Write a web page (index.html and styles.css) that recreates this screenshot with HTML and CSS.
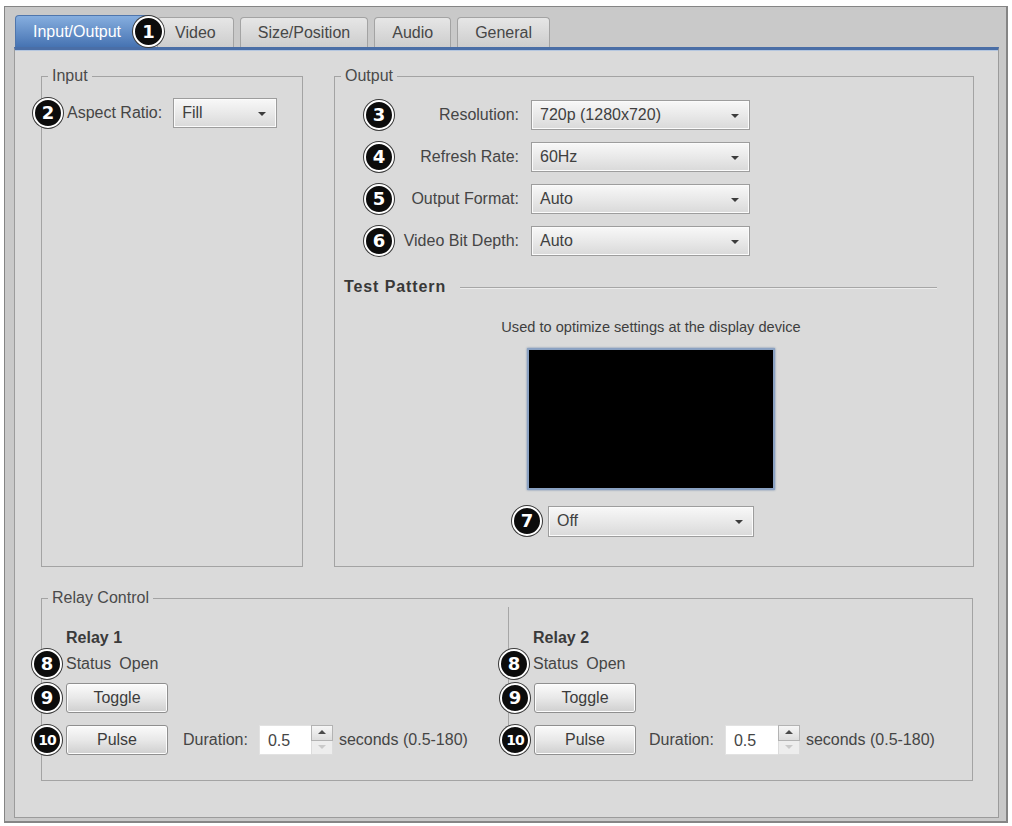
FILE: index.html
```html
<!DOCTYPE html>
<html lang="en">
<head>
    <meta charset="UTF-8">
    <title>Input/Output Settings</title>
    <link rel="stylesheet" href="styles.css">
</head>
<body>
    <div class="window">
        <div class="tabs">
            <div class="tab active">Input/Output<span class="badge badge-tab">1</span></div>
            <div class="tab">Video</div>
            <div class="tab">Size/Position</div>
            <div class="tab">Audio</div>
            <div class="tab">General</div>
        </div>

        <div class="panel">
            <div class="top-row">
                <fieldset class="group io-group">
                    <legend>Input</legend>
                    <div class="input-body">
                        <div class="field-row">
                            <span class="badge">2</span>
                            <label>Aspect Ratio:</label>
                            <div class="select select-fill">Fill</div>
                        </div>
                    </div>
                </fieldset>

                <fieldset class="group io-group">
                    <legend>Output</legend>
                    <div class="output-body">
                        <div class="output-grid">
                            <span class="badge">3</span>
                            <label>Resolution:</label>
                            <div class="select">720p (1280x720)</div>

                            <span class="badge">4</span>
                            <label>Refresh Rate:</label>
                            <div class="select">60Hz</div>

                            <span class="badge">5</span>
                            <label>Output Format:</label>
                            <div class="select">Auto</div>

                            <span class="badge">6</span>
                            <label>Video Bit Depth:</label>
                            <div class="select">Auto</div>
                        </div>

                        <div class="section-title">Test Pattern</div>
                        <p class="hint">Used to optimize settings at the display device</p>
                        <div class="pattern-preview"></div>
                        <div class="pattern-row">
                            <div class="pattern-select">
                                <span class="badge badge-side">7</span>
                                <div class="select select-off">Off</div>
                            </div>
                        </div>
                    </div>
                </fieldset>
            </div>

            <fieldset class="group relay-group">
                <legend>Relay Control</legend>
                <div class="relays">
                    <div class="relay">
                        <div class="relay-title">Relay 1</div>
                        <div class="relay-row status-row">
                            <span class="badge badge-left">8</span>
                            <span>Status</span><span class="status-value">Open</span>
                        </div>
                        <div class="relay-row toggle-row">
                            <span class="badge badge-left">9</span>
                            <button class="btn">Toggle</button>
                        </div>
                        <div class="relay-row pulse-row">
                            <span class="badge badge-left badge-10">10</span>
                            <button class="btn">Pulse</button>
                            <span class="duration-label">Duration:</span>
                            <div class="spin-input">
                                <div class="spin-value">0.5</div>
                                <div class="spin-buttons">
                                    <span class="spin-up"></span>
                                    <span class="spin-down"></span>
                                </div>
                            </div>
                            <span class="range-label">seconds (0.5-180)</span>
                        </div>
                    </div>

                    <div class="relay relay-second">
                        <div class="relay-title">Relay 2</div>
                        <div class="relay-row status-row">
                            <span class="badge badge-left">8</span>
                            <span>Status</span><span class="status-value">Open</span>
                        </div>
                        <div class="relay-row toggle-row">
                            <span class="badge badge-left">9</span>
                            <button class="btn">Toggle</button>
                        </div>
                        <div class="relay-row pulse-row">
                            <span class="badge badge-left badge-10">10</span>
                            <button class="btn">Pulse</button>
                            <span class="duration-label">Duration:</span>
                            <div class="spin-input">
                                <div class="spin-value">0.5</div>
                                <div class="spin-buttons">
                                    <span class="spin-up"></span>
                                    <span class="spin-down"></span>
                                </div>
                            </div>
                            <span class="range-label">seconds (0.5-180)</span>
                        </div>
                    </div>
                </div>
            </fieldset>
        </div>
    </div>
</body>
</html>
```

FILE: styles.css
```css
body {
    margin: 0;
    background: #fff;
    font-family: "Liberation Sans", Arial, sans-serif;
    font-size: 16px;
    color: #454545;
}
.window {
    box-sizing: border-box;
    width: 1004px;
    height: 817px;
    margin: 6px 0 0 4px;
    padding: 8px 7px 4px 9px;
    background: #c9c9c9;
    border: 1px solid #858585;
    border-right-width: 2px;
    border-bottom-width: 2px;
}

/* tabs */
.tabs {
    display: flex;
    align-items: flex-end;
    gap: 6px;
    height: 32px;
    margin-left: 1px;
}
.tab {
    position: relative;
    box-sizing: border-box;
    height: 30px;
    line-height: 29px;
    padding: 0 17px;
    background: linear-gradient(#e6e6e6, #cdcdcd);
    border: 1px solid #a3a3a3;
    border-bottom: none;
    border-radius: 4px 4px 0 0;
    color: #474747;
}
.tab.active {
    height: 32px;
    line-height: 32px;
    padding: 0 30px 0 17px;
    margin-right: -1px;
    background: linear-gradient(#86aedf, #4673b2);
    border-color: #4f76ad;
    color: #fff;
}

/* numbered callouts */
.badge {
    box-sizing: border-box;
    display: inline-flex;
    align-items: center;
    justify-content: center;
    flex: none;
    width: 30px;
    height: 30px;
    border-radius: 50%;
    background: #0c0c0c;
    border: 2px solid #fff;
    box-shadow: 0 0 0 1px #3a3a3a;
    color: #fff;
    font-family: "DejaVu Sans", sans-serif;
    font-weight: bold;
    font-size: 18px;
    line-height: 1;
}
.badge-tab {
    position: absolute;
    top: 0;
    right: -13px;
    width: 31px;
    height: 31px;
    z-index: 2;
}
.badge-10 {
    font-size: 14px;
    letter-spacing: -1px;
}

/* main panel */
.panel {
    box-sizing: border-box;
    height: 771px;
    padding: 17px 25px 0 26px;
    background: #dadada;
    border: 1px solid #9b9b9b;
    border-top: 3px solid #4a6ea6;
    box-shadow: inset 0 1px 0 #b4c6df;
}
.top-row {
    display: grid;
    grid-template-columns: 262px 640px;
    column-gap: 31px;
}

.group {
    box-sizing: border-box;
    margin: 0;
    padding: 0;
    min-width: 0;
    border: 1px solid #a3a3a3;
}
.group legend {
    margin-left: 6px;
    padding: 0 4px;
    line-height: 18px;
    color: #4a4a4a;
}
.io-group {
    height: 500px;
}

/* input */
.input-body {
    padding: 13px 0 0 0;
}
.field-row {
    display: flex;
    align-items: center;
    margin-left: -9px;
}
.field-row label {
    margin: 0 11px 0 4px;
}

/* dropdowns */
.select {
    position: relative;
    box-sizing: border-box;
    height: 30px;
    line-height: 27px;
    padding: 0 28px 0 8px;
    background: linear-gradient(#f8f8f8, #e9e9e9 50%, #d9d9d9);
    border: 1px solid #9d9d9d;
    box-shadow: inset 0 0 0 1px #fbfbfb;
    color: #404040;
    white-space: nowrap;
}
.select::after {
    content: "";
    position: absolute;
    right: 10px;
    top: 13px;
    border-left: 4px solid transparent;
    border-right: 4px solid transparent;
    border-top: 4px solid #3c3c3c;
}
.select-fill {
    width: 104px;
}

/* output */
.output-body {
    padding: 15px 15px 0 9px;
}
.output-grid {
    display: grid;
    grid-template-columns: 30px 137px 219px;
    grid-auto-rows: 30px;
    row-gap: 12px;
    align-items: center;
    margin-left: 20px;
}
.output-grid label {
    padding-right: 12px;
    text-align: right;
    white-space: nowrap;
}

.section-title {
    display: flex;
    align-items: center;
    margin: 22px 21px 0 0;
    line-height: 18px;
    font-weight: bold;
    letter-spacing: 0.9px;
    color: #383838;
}
.section-title::after {
    content: "";
    flex: 1;
    height: 0;
    margin: 2px 0 0 14px;
    border-top: 1px solid #a6a6a6;
    border-bottom: 1px solid #ececec;
}
.hint {
    margin: 22px 0 0;
    text-align: center;
    font-size: 14.6px;
    line-height: 18px;
    color: #3e3e3e;
}
.pattern-preview {
    box-sizing: border-box;
    width: 248px;
    height: 142px;
    margin: 12px auto 0;
    background: #000;
    border: 2px solid #8aa1c2;
    box-shadow: 0 0 2px #6f87aa;
}
.pattern-row {
    display: flex;
    justify-content: center;
    margin-top: 16px;
}
.pattern-select {
    position: relative;
}
.select-off {
    width: 206px;
    height: 31px;
}
.badge-side {
    position: absolute;
    left: -36px;
    top: 0;
}

/* relay control */
.relay-group {
    height: 192px;
    margin-top: 22px;
    padding-bottom: 21px;
}
.relays {
    display: grid;
    grid-template-columns: 466px 1fr;
    height: 100%;
    padding-bottom: 5px;
    box-sizing: border-box;
}
.relay {
    padding: 22px 0 0 24px;
}
.relay-second {
    border-left: 1px solid #a6a6a6;
}
.relay-title {
    line-height: 18px;
    font-weight: bold;
    color: #3a3a3a;
}
.relay-row {
    display: flex;
    align-items: center;
}
.badge-left {
    margin: -6px 4px -6px -34px;
}
.status-row {
    margin-top: 8px;
    line-height: 18px;
}
.status-value {
    margin-left: 8px;
}
.toggle-row {
    margin-top: 10px;
}
.pulse-row {
    margin-top: 12px;
}
.relay-second .toggle-row,
.relay-second .pulse-row {
    margin-left: 1px;
}

.btn {
    box-sizing: border-box;
    width: 102px;
    height: 30px;
    padding: 0;
    background: linear-gradient(#fbfbfb, #e8e8e8 50%, #cfcfcf);
    border: 1px solid #8f8f8f;
    border-radius: 3px;
    box-shadow: inset 0 0 0 1px #fdfdfd;
    font-family: inherit;
    font-size: 16px;
    color: #3c3c3c;
}
.duration-label {
    margin: 0 11px 0 15px;
}
.relay-second .duration-label {
    margin-left: 13px;
}
.spin-input {
    display: flex;
    height: 30px;
}
.spin-value {
    box-sizing: border-box;
    width: 52px;
    line-height: 30px;
    padding-left: 8px;
    background: #fff;
    border: 1px solid #e2e2e2;
    border-right: none;
}
.relay-second .spin-value {
    width: 53px;
}
.spin-buttons {
    display: flex;
    flex-direction: column;
    width: 22px;
}
.spin-up,
.spin-down {
    position: relative;
    flex: 1;
    box-sizing: border-box;
}
.spin-up {
    background: linear-gradient(#f6f6f6, #dddddd);
    border: 1px solid #b3b3b3;
}
.spin-down {
    background: #ededed;
    border: 1px solid #dcdcdc;
    border-top: none;
}
.spin-up::after,
.spin-down::after {
    content: "";
    position: absolute;
    left: 6px;
    top: 4px;
    border-left: 4px solid transparent;
    border-right: 4px solid transparent;
}
.spin-up::after {
    border-bottom: 4px solid #4a4a4a;
}
.spin-down::after {
    border-top: 4px solid #c9c9c9;
}
.range-label {
    margin-left: 6px;
    white-space: nowrap;
}
```
